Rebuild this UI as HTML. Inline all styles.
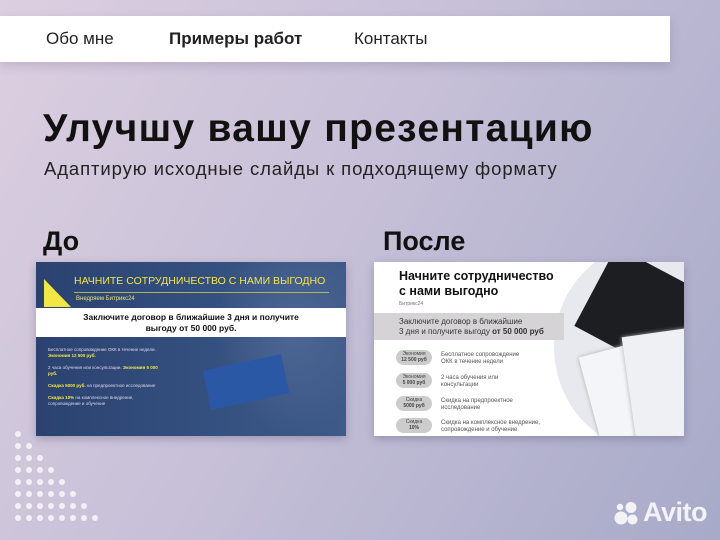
<!DOCTYPE html>
<html><head><meta charset="utf-8"><style>
*{margin:0;padding:0;box-sizing:border-box}
body{width:720px;height:540px;overflow:hidden;position:relative;font-family:"Liberation Sans","Noto Sans CJK SC",sans-serif;background:linear-gradient(120deg,#dccfe0 0%,#c7c0d8 45%,#a7aac8 100%)}
.nav{position:absolute;left:0;top:16px;width:670px;height:46px;background:#fff;box-shadow:0 4px 10px rgba(80,70,110,.2);font-size:17px;color:#222}
.nav span{position:absolute;top:13px;white-space:nowrap}
h1{position:absolute;left:43px;top:107px;font-size:39px;font-weight:bold;color:#111;letter-spacing:1.3px;white-space:nowrap}
.sub{position:absolute;left:44px;top:158px;font-size:18.5px;color:#222;letter-spacing:0.9px;white-space:nowrap}
.lbl{position:absolute;top:226px;font-size:27px;font-weight:bold;color:#111}
.card{position:absolute;top:262px;width:310px;height:174px;overflow:hidden;box-shadow:0 3px 8px rgba(60,60,100,.3)}
.l{left:36px;background:linear-gradient(90deg,#2b4270 0%,#34507f 55%,#3e5a88 100%)}
.r{left:374px;background:#fff}
.dots{position:absolute;left:15px;top:431px}
.dot{position:absolute;width:6px;height:6px;border-radius:50%;background:rgba(255,255,255,.75)}
.pill{position:absolute;left:22px;width:36px;height:15px;border-radius:8px;background:#ccc;font-size:5px;text-align:center;line-height:6px;padding-top:1px;color:#444}
.pt{position:absolute;left:67px;font-size:6px;color:#555;line-height:7px}
</style></head><body>
<div class="nav"><span style="left:46px">Обо мне</span><span style="left:169px;font-weight:bold">Примеры работ</span><span style="left:354px">Контакты</span></div>
<h1>Улучшу вашу презентацию</h1>
<div class="sub">Адаптирую исходные слайды к подходящему формату</div>
<div class="lbl" style="left:43px">До</div>
<div class="lbl" style="left:383px">После</div>

<div class="card l">
 <div style="position:absolute;right:0;top:0;width:130px;height:174px;background:radial-gradient(ellipse at 60% 40%,#4e6795,transparent 70%)"></div>
 <div style="position:absolute;left:170px;top:100px;width:80px;height:40px;background:#2b58a5;transform:rotate(-12deg)"></div>
 <svg style="position:absolute;left:8px;top:17px" width="28" height="30"><polygon points="0,0 0,28 27,28" fill="#f3e743"/></svg>
 <div style="position:absolute;left:38px;top:13px;font-size:10.5px;color:#f3e743;white-space:nowrap">НАЧНИТЕ СОТРУДНИЧЕСТВО С НАМИ ВЫГОДНО</div>
 <div style="position:absolute;left:38px;top:30px;width:255px;border-top:1px solid #a9b46a"></div>
 <div style="position:absolute;left:40px;top:34px;font-size:6px;color:#e8e27a">Внедряем Битрикс24</div>
 <div style="position:absolute;left:0;top:46px;width:310px;height:29px;background:#fff;text-align:center;font-size:8.5px;font-weight:bold;color:#111;line-height:11px;padding-top:4px">Заключите договор в ближайшие 3 дня и получите<br>выгоду от 50 000 руб.</div>
 <div style="position:absolute;left:12px;top:85px;font-size:4.5px;color:#dde;line-height:6px;width:110px">Бесплатное сопровождение ОКК в течение недели. <b style="color:#f3e743">Экономия 12 500 руб.</b><br><br>2 часа обучения или консультации. <b style="color:#f3e743">Экономия 5 000 руб.</b><br><br><b style="color:#f3e743">Скидка 5000 руб.</b> на предпроектное исследование<br><br><b style="color:#f3e743">Скидка 10%</b> на комплексное внедрение, сопровождение и обучение</div>
</div>

<div class="card r">
 <div style="position:absolute;left:180px;top:-20px;width:200px;height:210px;border-radius:50%;background:#e8e9ef"></div>
 <div style="position:absolute;left:215px;top:5px;width:110px;height:90px;background:#1d1e22;transform:rotate(28deg)"></div>
 <div style="position:absolute;left:215px;top:85px;width:70px;height:90px;background:#f4f5f8;transform:rotate(-15deg);box-shadow:0 0 4px #aaa"></div>
 <div style="position:absolute;left:255px;top:70px;width:70px;height:110px;background:#eef0f4;transform:rotate(-8deg);box-shadow:0 0 4px #aaa"></div>
 <div style="position:absolute;left:25px;top:7px;font-size:12.5px;font-weight:bold;color:#111;line-height:15px">Начните сотрудничество<br>с нами выгодно</div>
 <div style="position:absolute;left:25px;top:39px;font-size:5px;color:#777">Битрикс24</div>
 <div style="position:absolute;left:0;top:51px;width:190px;height:27px;background:#d6d3d6;font-size:8px;color:#333;padding:4px 0 0 25px;line-height:10px">Заключите договор в ближайшие<br>3 дня и получите выгоду <b>от 50 000 руб</b></div>
 <div class="pill" style="top:88px">Экономия<br><b>12 500 руб</b></div><div class="pt" style="top:90px">Бесплатное сопровождение<br>ОКК в течение недели</div>
 <div class="pill" style="top:111px">Экономия<br><b>5 000 руб</b></div><div class="pt" style="top:113px">2 часа обучения или<br>консультации</div>
 <div class="pill" style="top:134px">Скидка<br><b>5000 руб</b></div><div class="pt" style="top:136px">Скидка на предпроектное<br>исследование</div>
 <div class="pill" style="top:156px">Скидка<br><b>10%</b></div><div class="pt" style="top:158px">Скидка на комплексное внедрение,<br>сопровождение и обучение</div>
</div>

<div class="dots">
 <div class="dot" style="left:0;top:0"></div>
 <div class="dot" style="left:0;top:12px"></div><div class="dot" style="left:11px;top:12px"></div>
 <div class="dot" style="left:0;top:24px"></div><div class="dot" style="left:11px;top:24px"></div><div class="dot" style="left:22px;top:24px"></div>
 <div class="dot" style="left:0;top:36px"></div><div class="dot" style="left:11px;top:36px"></div><div class="dot" style="left:22px;top:36px"></div><div class="dot" style="left:33px;top:36px"></div>
 <div class="dot" style="left:0;top:48px"></div><div class="dot" style="left:11px;top:48px"></div><div class="dot" style="left:22px;top:48px"></div><div class="dot" style="left:33px;top:48px"></div><div class="dot" style="left:44px;top:48px"></div>
 <div class="dot" style="left:0;top:60px"></div><div class="dot" style="left:11px;top:60px"></div><div class="dot" style="left:22px;top:60px"></div><div class="dot" style="left:33px;top:60px"></div><div class="dot" style="left:44px;top:60px"></div><div class="dot" style="left:55px;top:60px"></div>
 <div class="dot" style="left:0;top:72px"></div><div class="dot" style="left:11px;top:72px"></div><div class="dot" style="left:22px;top:72px"></div><div class="dot" style="left:33px;top:72px"></div><div class="dot" style="left:44px;top:72px"></div><div class="dot" style="left:55px;top:72px"></div><div class="dot" style="left:66px;top:72px"></div>
 <div class="dot" style="left:0;top:84px"></div><div class="dot" style="left:11px;top:84px"></div><div class="dot" style="left:22px;top:84px"></div><div class="dot" style="left:33px;top:84px"></div><div class="dot" style="left:44px;top:84px"></div><div class="dot" style="left:55px;top:84px"></div><div class="dot" style="left:66px;top:84px"></div><div class="dot" style="left:77px;top:84px"></div>
</div>
<svg style="position:absolute;left:613px;top:500px" width="28" height="28"><g fill="rgba(255,255,255,.85)"><circle cx="8" cy="18" r="6.5"/><circle cx="19.5" cy="19.5" r="5"/><circle cx="18" cy="7.5" r="5.5"/><circle cx="7" cy="7" r="3.2"/></g></svg>
<div style="position:absolute;left:643px;top:497px;font-size:27px;font-weight:bold;color:rgba(255,255,255,.85);letter-spacing:-0.5px">Avito</div>
</body></html>
